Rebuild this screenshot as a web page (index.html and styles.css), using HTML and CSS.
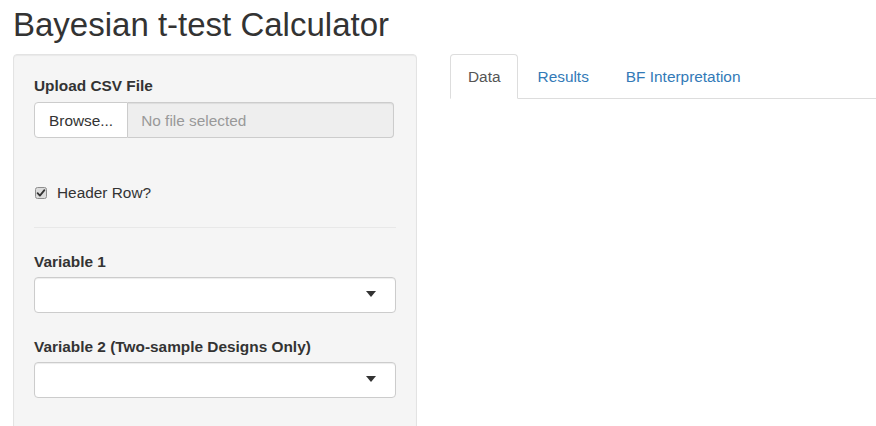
FILE: index.html
```html
<!DOCTYPE html>
<html lang="en">
<head>
<meta charset="utf-8">
<title>Bayesian t-test Calculator</title>
<link rel="stylesheet" href="styles.css">
</head>
<body>
<div class="page">
  <h1 class="title">Bayesian t-test Calculator</h1>
  <div class="row">
    <aside class="well">
      <div class="form-group file-group">
        <label class="control-label">Upload CSV File</label>
        <div class="input-group">
          <span class="btn">Browse...</span>
          <span class="file-field">No file selected</span>
        </div>
      </div>
      <div class="checkbox">
        <svg class="check-icon" width="12" height="12" viewBox="0 0 12 12" aria-hidden="true">
          <rect x="0.5" y="0.5" width="11" height="11" rx="2" ry="2" fill="#dcdcdc" stroke="#8e8e8e"/>
          <path d="M2.6 6.2 L4.9 8.6 L9.4 3.2" fill="none" stroke="#333" stroke-width="1.8" stroke-linecap="round" stroke-linejoin="round"/>
        </svg>
        <span class="check-label">Header Row?</span>
      </div>
      <hr class="divider">
      <div class="form-group">
        <label class="control-label">Variable 1</label>
        <div class="select"><span class="caret"></span></div>
      </div>
      <div class="form-group">
        <label class="control-label">Variable 2 (Two-sample Designs Only)</label>
        <div class="select"><span class="caret"></span></div>
      </div>
    </aside>
    <main class="main">
      <ul class="nav-tabs">
        <li class="tab active"><a>Data</a></li>
        <li class="tab"><a>Results</a></li>
        <li class="tab"><a>BF Interpretation</a></li>
      </ul>
    </main>
  </div>
</div>
</body>
</html>
```

FILE: styles.css
```css
* { box-sizing: border-box; }

html, body {
  margin: 0;
  padding: 0;
  background: #fff;
  overflow: hidden;
}

body {
  font-family: "Liberation Sans", Arial, sans-serif;
  font-size: 15.4px;
  line-height: 21px;
  color: #333;
}

.page {
  padding-left: 13px;
  padding-top: 7px;
}

.title {
  margin: 0;
  font-size: 33px;
  line-height: 36px;
  font-weight: 400;
  color: #333;
  white-space: nowrap;
}

.row {
  display: flex;
  margin-top: 11px;
  gap: 33px;
  align-items: flex-start;
}

.well {
  flex: 0 0 404px;
  width: 404px;
  min-height: 420px;
  background: #f5f5f5;
  border: 1px solid #e3e3e3;
  border-radius: 4px;
  box-shadow: inset 0 1px 1px rgba(0, 0, 0, 0.05);
  padding: 20px;
}

.form-group {
  margin-bottom: 23px;
}

.file-group {
  margin-bottom: 44px;
}

.control-label {
  display: block;
  font-weight: 700;
  margin-bottom: 5px;
}

.file-group .control-label {
  margin-bottom: 6px;
}

.input-group {
  display: flex;
  height: 36px;
  width: 360px;
}

.btn {
  display: flex;
  align-items: center;
  padding: 0 14px;
  background: #fff;
  border: 1px solid #ccc;
  border-radius: 4px 0 0 4px;
  color: #333;
}

.file-field {
  flex: 1;
  display: flex;
  align-items: center;
  padding: 0 13px;
  background: #eee;
  border: 1px solid #ccc;
  border-left: none;
  border-radius: 0 4px 4px 0;
  color: #999;
  box-shadow: inset 0 1px 1px rgba(0, 0, 0, 0.075);
}

.checkbox {
  display: flex;
  align-items: center;
  height: 21px;
  padding-left: 1px;
}

.check-icon {
  display: block;
  margin-right: 10px;
}

.divider {
  margin: 24px 0 23px;
  border: 0;
  border-top: 1px solid #e8e8e8;
  height: 0;
}

.select {
  position: relative;
  height: 36px;
  background: #fff;
  border: 1px solid #ccc;
  border-radius: 4px;
  box-shadow: inset 0 1px 1px rgba(0, 0, 0, 0.075);
}

.caret {
  position: absolute;
  right: 19px;
  top: 13px;
  width: 0;
  height: 0;
  border-left: 5.5px solid transparent;
  border-right: 5.5px solid transparent;
  border-top: 6px solid #333;
}

.main {
  flex: 1;
  min-width: 0;
}

.nav-tabs {
  display: flex;
  list-style: none;
  margin: 0;
  padding: 0;
  border-bottom: 1px solid #ddd;
}

.tab {
  margin-right: 2px;
  margin-bottom: -1px;
}

.tab a {
  display: block;
  padding: 11px 16px 11px 17px;
  line-height: 21px;
  border: 1px solid transparent;
  border-radius: 4px 4px 0 0;
  color: #337ab7;
  white-space: nowrap;
}

.tab.active a {
  color: #555;
  background: #fff;
  border-color: #ddd;
  border-bottom-color: transparent;
}
```
